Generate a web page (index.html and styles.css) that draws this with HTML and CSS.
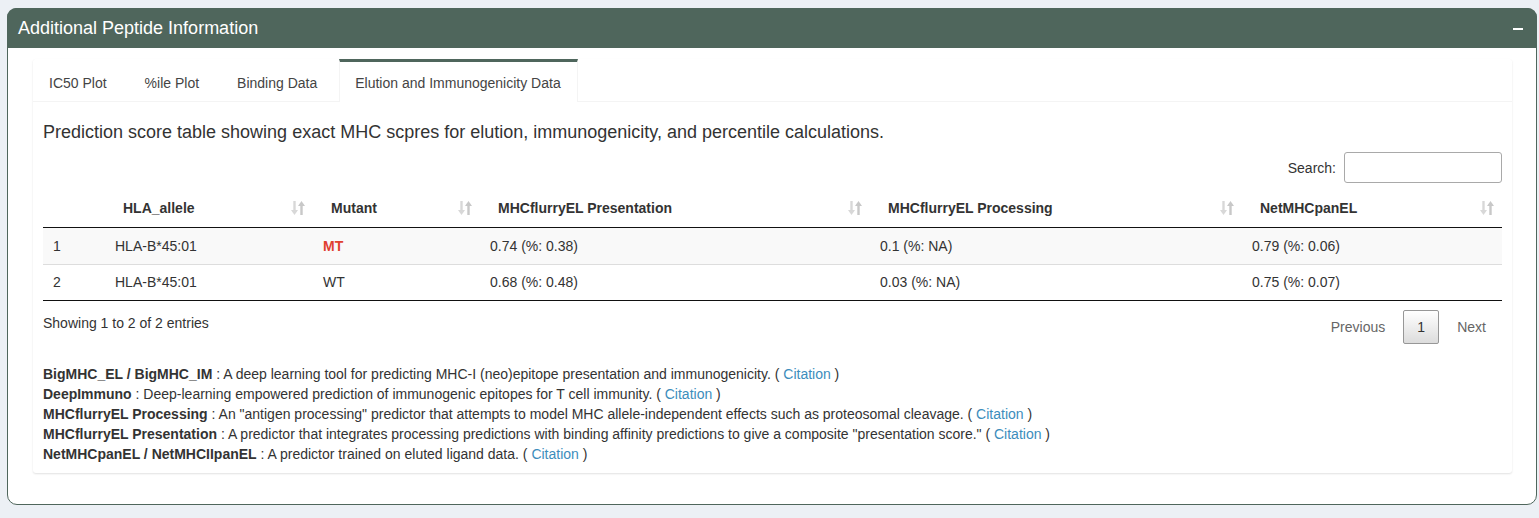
FILE: index.html
```html
<!DOCTYPE html>
<html>
<head>
<meta charset="utf-8">
<link rel="stylesheet" href="styles.css">
</head>
<body>
<div class="box">
  <div class="box-header">
    <h3 class="box-title">Additional Peptide Information</h3>
    <span class="collapse-btn"></span>
  </div>
  <div class="box-body">
    <div class="tabs-card">
      <ul class="nav-tabs">
        <li class="tab">IC50 Plot</li>
        <li class="tab">%ile Plot</li>
        <li class="tab">Binding Data</li>
        <li class="tab active">Elution and Immunogenicity Data</li>
      </ul>
      <div class="tab-content">
        <p class="lead">Prediction score table showing exact MHC scpres for elution, immunogenicity, and percentile calculations.</p>
        <div class="dt-top">
          <label class="search-label">Search:</label>
          <span class="search-input"></span>
        </div>
        <table class="dt">
          <colgroup>
            <col class="c0"><col class="c1"><col class="c2"><col class="c3"><col class="c4"><col class="c5">
          </colgroup>
          <thead>
            <tr>
              <th class="num"></th>
              <th><span class="sort"><svg width="16" height="18" viewBox="0 0 16 18"><path d="M4.5 2v10" stroke="#d8d8d8" stroke-width="2.4"/><path d="M1 11l3.5 5 3.5-5z" fill="#d8d8d8"/><path d="M11.5 16V6" stroke="#c8c8c8" stroke-width="2.4"/><path d="M8 7l3.5-5 3.5 5z" fill="#c8c8c8"/></svg></span>HLA_allele</th>
              <th><span class="sort"><svg width="16" height="18" viewBox="0 0 16 18"><path d="M4.5 2v10" stroke="#d8d8d8" stroke-width="2.4"/><path d="M1 11l3.5 5 3.5-5z" fill="#d8d8d8"/><path d="M11.5 16V6" stroke="#c8c8c8" stroke-width="2.4"/><path d="M8 7l3.5-5 3.5 5z" fill="#c8c8c8"/></svg></span>Mutant</th>
              <th><span class="sort"><svg width="16" height="18" viewBox="0 0 16 18"><path d="M4.5 2v10" stroke="#d8d8d8" stroke-width="2.4"/><path d="M1 11l3.5 5 3.5-5z" fill="#d8d8d8"/><path d="M11.5 16V6" stroke="#c8c8c8" stroke-width="2.4"/><path d="M8 7l3.5-5 3.5 5z" fill="#c8c8c8"/></svg></span>MHCflurryEL Presentation</th>
              <th><span class="sort"><svg width="16" height="18" viewBox="0 0 16 18"><path d="M4.5 2v10" stroke="#d8d8d8" stroke-width="2.4"/><path d="M1 11l3.5 5 3.5-5z" fill="#d8d8d8"/><path d="M11.5 16V6" stroke="#c8c8c8" stroke-width="2.4"/><path d="M8 7l3.5-5 3.5 5z" fill="#c8c8c8"/></svg></span>MHCflurryEL Processing</th>
              <th><span class="sort"><svg width="16" height="18" viewBox="0 0 16 18"><path d="M4.5 2v10" stroke="#d8d8d8" stroke-width="2.4"/><path d="M1 11l3.5 5 3.5-5z" fill="#d8d8d8"/><path d="M11.5 16V6" stroke="#c8c8c8" stroke-width="2.4"/><path d="M8 7l3.5-5 3.5 5z" fill="#c8c8c8"/></svg></span>NetMHCpanEL</th>
            </tr>
          </thead>
          <tbody>
            <tr class="odd">
              <td>1</td><td>HLA-B*45:01</td><td><span class="mt">MT</span></td><td>0.74 (%: 0.38)</td><td>0.1 (%: NA)</td><td>0.79 (%: 0.06)</td>
            </tr>
            <tr class="even">
              <td>2</td><td>HLA-B*45:01</td><td>WT</td><td>0.68 (%: 0.48)</td><td>0.03 (%: NA)</td><td>0.75 (%: 0.07)</td>
            </tr>
          </tbody>
        </table>
        <div class="dt-bottom">
          <div class="info">Showing 1 to 2 of 2 entries</div>
          <div class="paging">
            <span class="pbtn disabled">Previous</span>
            <span class="pbtn current">1</span>
            <span class="pbtn disabled">Next</span>
          </div>
        </div>
        <div class="notes">
          <div><b>BigMHC_EL / BigMHC_IM</b> : A deep learning tool for predicting MHC-I (neo)epitope presentation and immunogenicity. ( <a class="cite">Citation</a> )</div>
          <div><b>DeepImmuno</b> : Deep-learning empowered prediction of immunogenic epitopes for T cell immunity. ( <a class="cite">Citation</a> )</div>
          <div><b>MHCflurryEL Processing</b> : An "antigen processing" predictor that attempts to model MHC allele-independent effects such as proteosomal cleavage. ( <a class="cite">Citation</a> )</div>
          <div><b>MHCflurryEL Presentation</b> : A predictor that integrates processing predictions with binding affinity predictions to give a composite "presentation score." ( <a class="cite">Citation</a> )</div>
          <div><b>NetMHCpanEL / NetMHCIIpanEL</b> : A predictor trained on eluted ligand data. ( <a class="cite">Citation</a> )</div>
        </div>
      </div>
    </div>
  </div>
</div>
</body>
</html>
```

FILE: styles.css
```css
* { box-sizing: border-box; }
html, body { margin: 0; }
body {
  background: #ecf0f5;
  padding: 8px 2px 0 7px;
  font-family: "Liberation Sans", Arial, sans-serif;
  font-size: 14px;
  color: #333;
  height: 518px;
}
.box {
  border: 1px solid #4f665c;
  border-radius: 10px;
  background: #fff;
  width: 1530px;
  height: 497px;
}
.box-header {
  background: #4f665c;
  height: 40px;
  border-radius: 9px 9px 0 0;
  display: flex;
  align-items: center;
  justify-content: space-between;
  padding: 0 14px 0 11px;
  margin: -1px -1px 0 -1px;
}
.box-title {
  margin: 0;
  font-size: 18px;
  font-weight: normal;
  color: #fff;
}
.collapse-btn {
  display: block;
  width: 10px;
  height: 2px;
  background: #fff;
  margin-top: 1px;
}
.box-body {
  padding: 11px 24px 0 25px;
}
.tabs-card {
  background: #fff;
  border-radius: 3px;
  box-shadow: 0 1px 2px rgba(0,0,0,0.12);
  width: 1479px;
  height: 414px;
}
.nav-tabs {
  list-style: none;
  margin: 0;
  padding: 0;
  display: flex;
  height: 43px;
  border-bottom: 1px solid #f4f4f4;
}
.tab {
  padding: 0 15px;
  margin-right: 6px;
  height: 43px;
  display: flex;
  align-items: center;
  padding-top: 5px;
  color: #444;
  font-size: 14px;
  border-left: 1px solid transparent;
  border-right: 1px solid transparent;
}
.tab.active {
  border-top: 3px solid #4f665c;
  padding: 2px 16px 0 15px;
  border-left-color: #f4f4f4;
  border-right-color: #f4f4f4;
  background: #fff;
  height: 43px;
  margin-bottom: -1px;
}
.tab-content {
  padding: 10px;
}
.lead {
  margin: 10px 0 0 0;
  font-size: 18px;
  line-height: 20px;
  color: #333;
}
.dt-top {
  display: flex;
  justify-content: flex-end;
  align-items: center;
  margin-top: 10px;
  height: 31px;
}
.search-label {
  font-size: 14px;
  color: #333;
  margin-right: 8px;
}
.search-input {
  display: block;
  width: 158px;
  height: 31px;
  border: 1px solid #a9a9a9;
  border-radius: 3px;
  background: #fff;
}
.dt {
  border-collapse: collapse;
  table-layout: fixed;
  width: 1459px;
  margin-top: 5px;
}
.c0 { width: 62px; }
.c1 { width: 208px; }
.c2 { width: 167px; }
.c3 { width: 390px; }
.c4 { width: 372px; }
.c5 { width: 260px; }
.dt th {
  text-align: left;
  font-weight: bold;
  font-size: 14px;
  line-height: 20px;
  padding: 10px 7px 9px 18px;
  border-bottom: 1px solid #111;
  color: #333;
}
.sort {
  float: right;
  height: 20px;
  display: flex;
  align-items: center;
}
.dt td {
  padding: 8px 10px;
  line-height: 20px;
  font-size: 14px;
  color: #333;
}
.dt tr.odd td { background: #f9f9f9; }
.dt tr.even td { border-top: 1px solid #ddd; padding-top: 7px; }
.dt tbody tr:last-child td { border-bottom: 1px solid #111; }
.mt {
  color: #e0402f;
  font-weight: bold;
}
.dt-bottom {
  display: flex;
  justify-content: space-between;
  align-items: center;
  padding-top: 3px;
  height: 45px;
  box-sizing: content-box;
}
.info { font-size: 14px; color: #333; margin-top: -8px; }
.paging {
  display: flex;
  align-items: center;
}
.pbtn {
  display: block;
  padding: 0 15px;
  height: 34px;
  line-height: 32px;
  border: 1px solid transparent;
  border-radius: 2px;
  font-size: 14px;
  color: #666;
  margin-left: 2px;
}
.pbtn.current {
  border: 1px solid #979797;
  background: linear-gradient(to bottom, #fff 0%, #dcdcdc 100%);
  color: #333;
  width: 36px;
  padding: 0;
  text-align: center;
}
.notes {
  margin-top: 15px;
  font-size: 14px;
  line-height: 20px;
  color: #333;
}
.notes b { font-weight: bold; }
.cite { color: #3c8dbc; text-decoration: none; }
```
